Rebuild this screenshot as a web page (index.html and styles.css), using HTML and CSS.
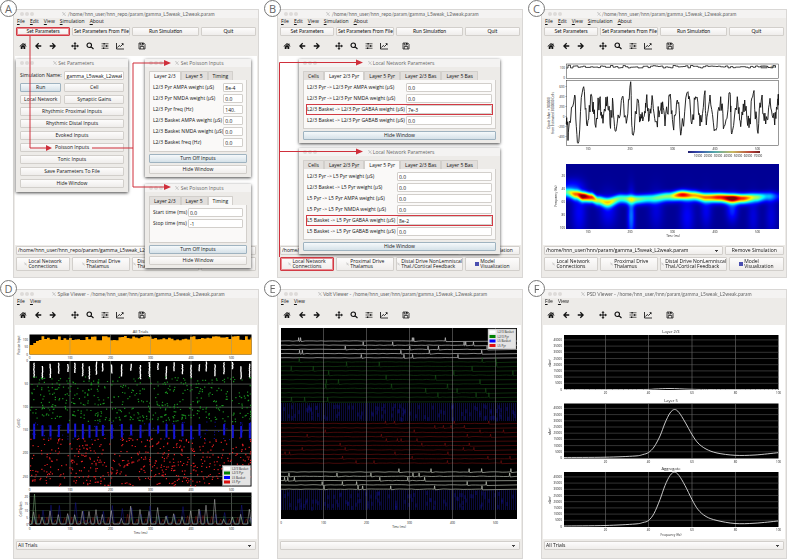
FILE: index.html
```html
<!DOCTYPE html>
<html lang="en">
<head>
  <meta charset="UTF-8" />
  <title>HNN gamma tutorial</title>
  <link rel="stylesheet" href="styles.css">
</head>
<body>
  <svg class="sprite" aria-hidden="true">
    <symbol id="i-home" viewBox="0 0 16 16"><path d="M8 2 1 8.5l1 1.2L8 4.400l6 5.300 1-1.200-2-1.900V3h-2v1.700zM3.500 9.500V14H7v-3.500h2V14h3.500V9.500L8 5.700z"/></symbol>
    <symbol id="i-back" viewBox="0 0 16 16"><path d="M8.500 1.500 2 8l6.500 6.500 1.800-1.800L7 9.500h7.500v-3H7l3.300-3.200z"/></symbol>
    <symbol id="i-forward" viewBox="0 0 16 16"><path d="M7.500 1.500 14 8l-6.500 6.500-1.800-1.800L9 9.500H1.500v-3H9L5.700 3.300z"/></symbol>
    <symbol id="i-move" viewBox="0 0 16 16"><path d="M8 0 5 3.500h2V7H3.500V5L0 8l3.500 3V9H7v3.500H5L8 16l3-3.500H9V9h3.500v2L16 8l-3.500-3v2H9V3.500h2z"/></symbol>
    <symbol id="i-search" viewBox="0 0 16 16"><path d="M10 9.500 15 14M11 6.500a4.500 4.500 0 1 1-9 0 4.500 4.500 0 0 1 9 0z" fill="none" stroke="#111" stroke-width="2.300"/></symbol>
    <symbol id="i-sliders" viewBox="0 0 16 16"><path d="M1 3.500h14M1 8h14M1 12.500h14" stroke="#111" stroke-width="1.300"/><path d="M5 2h2.500v3H5zM10 6.500h2.500v3H10zM4 11h2.500v3H4z"/></symbol>
    <symbol id="i-chart" viewBox="0 0 16 16"><path d="M1 2v12h15M3 11l3.500-4L9 9l5-5" fill="none" stroke="#111" stroke-width="1.700"/><path d="M10.500 2.500H15V7z"/></symbol>
    <symbol id="i-save" viewBox="0 0 16 16"><path d="M2 2h9.500L14 4.500V14H2zM4.500 2v4h6V2M4.500 14V9h7v5" fill="none" stroke="#111" stroke-width="1.500"/><path d="M8 2h2v3H8z"/></symbol>
    <symbol id="i-x" viewBox="0 0 10 10"><path d="M1 1h2l6 8H7zM9 1 1 9" fill="none" stroke="#999" stroke-width=".8"/></symbol>
  </svg>

  <main class="panels">
    <section class="window">
      <span class="badge">A</span>
      <header class="title"><i></i><i></i><i></i><span><svg><use href="#i-x"/></svg> /home/hnn_user/hnn_repo/param/gamma_L5weak_L2weak.param</span></header>
      <nav class="menu"><a href="#">File</a><a href="#">Edit</a><a href="#">View</a><a href="#">Simulation</a><a href="#">About</a></nav>
      <div class="actions">
        <button class="marked">Set Parameters</button><button>Set Parameters From File</button><button>Run Simulation</button><button>Quit</button>
      </div>
      <div class="toolbar"></div>
      <div class="canvas empty"></div>
      <div class="bar">
        <select aria-label="Simulation"><option>/home/hnn_user/hnn_repo/param/gamma_L5weak_L2weak.param</option></select>
        <button>Remove Simulation</button>
      </div>
      <div class="views">
        <button><svg><use href="#i-x"/></svg><span>Local Network<br>Connections</span></button>
        <button><svg><use href="#i-x"/></svg><span>Proximal Drive<br>Thalamus</span></button>
        <button><svg><use href="#i-x"/></svg><span>Distal Drive NonLemniscal<br>Thal./Cortical Feedback</span></button>
        <button><b></b><span>Model<br>Visualization</span></button>
      </div>

      <div class="dialog params">
        <header class="title"><i></i><i></i><i></i><span><svg><use href="#i-x"/></svg> Set Parameters</span></header>
        <div class="form">
          <label for="sim">Simulation Name:</label><input id="sim" value="gamma_L5weak_L2weak">
          <button class="active">Run</button><button>Cell</button>
          <button>Local Network</button><button>Synaptic Gains</button>
          <button class="wide">Rhythmic Proximal Inputs</button>
          <button class="wide">Rhythmic Distal Inputs</button>
          <button class="wide">Evoked Inputs</button>
          <button class="wide">Poisson Inputs</button>
          <button class="wide">Tonic Inputs</button>
          <button class="wide">Save Parameters To File</button>
          <button class="wide">Hide Window</button>
        </div>
      </div>

      <div class="dialog poisson">
        <header class="title"><i></i><i></i><i></i><span><svg><use href="#i-x"/></svg> Set Poisson Inputs</span></header>
        <div class="tabs"><button class="on">Layer 2/3</button><button>Layer 5</button><button>Timing</button></div>
        <div class="pane weights">
          <label>L2/3 Pyr AMPA weight (µS)<input value="8e-4"></label>
          <label>L2/3 Pyr NMDA weight (µS)<input value="0.0"></label>
          <label>L2/3 Pyr freq (Hz)<input value="140."></label>
          <label>L2/3 Basket AMPA weight (µS)<input value="0.0"></label>
          <label>L2/3 Basket NMDA weight (µS)<input value="0.0"></label>
          <label>L2/3 Basket freq (Hz)<input value="0.0"></label>
        </div>
        <div class="foot"><button class="active">Turn Off Inputs</button><button>Hide Window</button></div>
      </div>

      <div class="dialog poisson second">
        <header class="title"><i></i><i></i><i></i><span><svg><use href="#i-x"/></svg> Set Poisson Inputs</span></header>
        <div class="tabs"><button>Layer 2/3</button><button>Layer 5</button><button class="on">Timing</button></div>
        <div class="pane timing">
          <label>Start time (ms)<input value="0.0"></label>
          <label>Stop time (ms)<input value="-1"></label>
        </div>
        <div class="foot"><button class="active">Turn Off Inputs</button><button>Hide Window</button></div>
      </div>

      <svg class="arrows" viewBox="14 10 244 267">
        <path d="M30 36V148H47M92 148h41M166 63H133V187H166"/>
        <path class="head" d="M46 145l6 3-6 3zM164 60l7 3-7 3zM164 184l7 3-7 3z"/>
      </svg>
    </section>

    <section class="window">
      <span class="badge">B</span>
      <header class="title"><i></i><i></i><i></i><span><svg><use href="#i-x"/></svg> /home/hnn_user/hnn_repo/param/gamma_L5weak_L2weak.param</span></header>
      <nav class="menu"><a href="#">File</a><a href="#">Edit</a><a href="#">View</a><a href="#">Simulation</a><a href="#">About</a></nav>
      <div class="actions">
        <button>Set Parameters</button><button>Set Parameters From File</button><button>Run Simulation</button><button>Quit</button>
      </div>
      <div class="toolbar"></div>
      <div class="canvas empty"></div>
      <div class="bar">
        <select aria-label="Simulation"><option>/home/hnn_user/hnn_repo/param/gamma_L5weak_L2weak.param</option></select>
        <button>Remove Simulation</button>
      </div>
      <div class="views">
        <button class="marked"><svg><use href="#i-x"/></svg><span>Local Network<br>Connections</span></button>
        <button><svg><use href="#i-x"/></svg><span>Proximal Drive<br>Thalamus</span></button>
        <button><svg><use href="#i-x"/></svg><span>Distal Drive NonLemniscal<br>Thal./Cortical Feedback</span></button>
        <button><b></b><span>Model<br>Visualization</span></button>
      </div>

      <div class="dialog network">
        <header class="title"><i></i><i></i><i></i><span><svg><use href="#i-x"/></svg> Local Network Parameters</span></header>
        <div class="tabs"><button>Cells</button><button class="on">Layer 2/3 Pyr</button><button>Layer 5 Pyr</button><button>Layer 2/3 Bas</button><button>Layer 5 Bas</button></div>
        <div class="pane">
          <label>L2/3 Pyr -&gt; L2/3 Pyr AMPA weight (µS)<input value="0.0"></label>
          <label>L2/3 Pyr -&gt; L2/3 Pyr NMDA weight (µS)<input value="0.0"></label>
          <label class="marked">L2/3 Basket -&gt; L2/3 Pyr GABAA weight (µS)<input value="7e-3"></label>
          <label>L2/3 Basket -&gt; L2/3 Pyr GABAB weight (µS)<input value="0.0"></label>
        </div>
        <div class="foot"><button class="active">Hide Window</button></div>
      </div>

      <div class="dialog network second">
        <header class="title"><i></i><i></i><i></i><span><svg><use href="#i-x"/></svg> Local Network Parameters</span></header>
        <div class="tabs"><button>Cells</button><button>Layer 2/3 Pyr</button><button class="on">Layer 5 Pyr</button><button>Layer 2/3 Bas</button><button>Layer 5 Bas</button></div>
        <div class="pane">
          <label>L2/3 Pyr -&gt; L5 Pyr weight (µS)<input value="0.0"></label>
          <label>L2/3 Basket -&gt; L5 Pyr weight (µS)<input value="0.0"></label>
          <label>L5 Pyr -&gt; L5 Pyr AMPA weight (µS)<input value="0.0"></label>
          <label>L5 Pyr -&gt; L5 Pyr NMDA weight (µS)<input value="0.0"></label>
          <label class="marked">L5 Basket -&gt; L5 Pyr GABAA weight (µS)<input value="8e-2"></label>
          <label>L5 Basket -&gt; L5 Pyr GABAB weight (µS)<input value="0.0"></label>
        </div>
        <div class="foot"><button class="active">Hide Window</button></div>
      </div>

      <svg class="arrows" viewBox="278 10 244 267">
        <path d="M357 62.500H279.500V257M279.500 151.500H357"/>
        <path class="head" d="M356 59.500l7 3-7 3zM356 148.500l7 3-7 3z"/>
      </svg>
    </section>

    <section class="window">
      <span class="badge">C</span>
      <header class="title"><i></i><i></i><i></i><span><svg><use href="#i-x"/></svg> /home/hnn_user/hnn/param/gamma_L5weak_L2weak.param</span></header>
      <nav class="menu"><a href="#">File</a><a href="#">Edit</a><a href="#">View</a><a href="#">Simulation</a><a href="#">About</a></nav>
      <div class="actions">
        <button>Set Parameters</button><button>Set Parameters From File</button><button>Run Simulation</button><button>Quit</button>
      </div>
      <div class="toolbar"></div>
      <div class="canvas">
        <svg id="dipole" viewBox="543 56 242 189">
          <foreignObject x="566" y="164" width="213" height="65"><canvas id="spectrogram" width="426" height="130"></canvas></foreignObject>
        </svg>
      </div>
      <div class="bar">
        <select aria-label="Simulation"><option>/home/hnn_user/hnn/param/gamma_L5weak_L2weak.param</option></select>
        <button>Remove Simulation</button>
      </div>
      <div class="views">
        <button><svg><use href="#i-x"/></svg><span>Local Network<br>Connections</span></button>
        <button><svg><use href="#i-x"/></svg><span>Proximal Drive<br>Thalamus</span></button>
        <button><svg><use href="#i-x"/></svg><span>Distal Drive NonLemniscal<br>Thal./Cortical Feedback</span></button>
        <button><b></b><span>Model<br>Visualization</span></button>
      </div>
    </section>

    <section class="window viewer">
      <span class="badge">D</span>
      <header class="title"><i></i><i></i><i></i><span><svg><use href="#i-x"/></svg> Spike Viewer - /home/hnn_user/hnn/param/gamma_L5weak_L2weak.param</span></header>
      <nav class="menu"><a href="#">File</a><a href="#">View</a></nav>
      <div class="toolbar"></div>
      <div class="canvas"><svg id="spikes" viewBox="15 325 242 214"></svg></div>
      <div class="bar"><select aria-label="Trial"><option>All Trials</option></select></div>
    </section>

    <section class="window viewer">
      <span class="badge">E</span>
      <header class="title"><i></i><i></i><i></i><span><svg><use href="#i-x"/></svg> Volt Viewer - /home/hnn_user/hnn/param/gamma_L5weak_L2weak.param</span></header>
      <nav class="menu"><a href="#">File</a><a href="#">View</a></nav>
      <div class="toolbar"></div>
      <div class="canvas"><svg id="volts" viewBox="279 325 242 214"></svg></div>
      <div class="bar"><select aria-label="Trial"><option></option></select></div>
    </section>

    <section class="window viewer">
      <span class="badge">F</span>
      <header class="title"><i></i><i></i><i></i><span><svg><use href="#i-x"/></svg> PSD Viewer - /home/hnn_user/hnn/param/gamma_L5weak_L2weak.param</span></header>
      <nav class="menu"><a href="#">File</a><a href="#">View</a></nav>
      <div class="toolbar"></div>
      <div class="canvas"><svg id="psd" viewBox="543 325 242 214"></svg></div>
      <div class="bar"><select aria-label="Trial"><option>All Trials</option></select></div>
    </section>
  </main>
  <script src="plots.js"></script>
</body>
</html>
```
FILE: styles.css
```css
* {
  box-sizing: border-box;
}

body {
  margin: 0;
  background: #fff;
  color: #111;
  font-family: "Open Sans", "Noto Sans", sans-serif;
  font-size: 5px;
  line-height: 5px;
}

button, input, select {
  font: inherit;
  color: inherit;
  margin: 0;
  padding: 0;
  border: 1px solid #d2cfcb;
  border-radius: 1px;
  min-width: 0;
  height: 9px;
  white-space: nowrap;
}

button, select {
  background: linear-gradient(#fdfcfc, #efedeb);
}

input {
  background: #fff;
  padding: 0 1px;
  width: 100%;
}

.sprite {
  display: none;
}

.panels {
  display: grid;
  grid-template-columns: repeat(3, 1fr);
  gap: 11px 18px;
  padding: 9px 2px 0 13px;
}

.window {
  position: relative;
  background: #edebe8;
  border: 1px solid #d9d7d5;
  padding-bottom: 6px;
}

.viewer {
  padding-bottom: 8px;
}

.badge {
  position: absolute;
  z-index: 2;
  left: -14px;
  top: -10px;
  width: 17px;
  height: 17px;
  border: 1px solid #777;
  border-radius: 50%;
  background: #fff;
  color: #666;
  font-size: 11px;
  line-height: 15px;
  text-align: center;
}

.title {
  display: flex;
  align-items: center;
  gap: 1px;
  height: 8px;
  padding-left: 6px;
  background: #f4f3f2;
  color: #666;
  font-family: Lato, "Liberation Sans", sans-serif;
}

.title i {
  width: 4px;
  height: 4px;
  border-radius: 50%;
  background: #dddbd9;
}

.title span {
  flex: 1;
  padding-right: 16px;
  text-align: center;
  white-space: nowrap;
}

.title svg {
  width: 4px;
  height: 4px;
}

.menu {
  display: flex;
  gap: 5px;
  height: 7px;
  padding: 1px 3px;
}

.menu a {
  color: #111;
  text-decoration: none;
}

.menu a::first-letter {
  text-decoration: underline;
}

.actions, .views {
  display: grid;
  grid-template-columns: 54fr 58fr 66fr 55fr;
  gap: 2px;
  padding: 0 2px;
}

.actions {
  margin-top: 2px;
}

.actions button {
  font-family: Lato, "Liberation Sans", sans-serif;
}

.toolbar {
  display: flex;
  align-items: center;
  height: 20px;
  padding-left: 1px;
}

.toolbar button {
  width: 15px;
  height: 15px;
  border: 0;
  background: none;
}

.toolbar .gap {
  margin-left: 7px;
}

.toolbar svg {
  display: block;
  width: 8px;
  height: 8px;
  margin: auto;
  fill: #111;
}

.canvas {
  margin: 0 1px;
  background: #fff;
}

.empty {
  height: 189px;
}

.canvas svg {
  display: block;
  width: 100%;
  height: auto;
}

.canvas text {
  font-size: 3px;
  fill: #222;
  text-anchor: middle;
}

.canvas .name {
  font-size: 4px;
}

.canvas .end {
  text-anchor: end;
}

.canvas .start {
  text-anchor: start;
}

#spectrogram {
  display: block;
  width: 213px;
  height: 65px;
}

.bar {
  display: grid;
  grid-template-columns: 3fr 1fr;
  gap: 2px;
  margin-top: 1px;
  padding: 0 2px;
}

.viewer .bar {
  grid-template-columns: 1fr;
  margin-top: 2px;
}

select {
  appearance: none;
  width: 100%;
  padding: 0 1px;
  background: linear-gradient(#444, #444) right 4px top 3px / 3px 1px no-repeat, linear-gradient(#444, #444) right 5px top 4px / 1px 1px no-repeat, linear-gradient(#fdfcfc, #efedeb);
}

.views {
  margin-top: 2px;
}

.views button {
  display: flex;
  align-items: center;
  justify-content: center;
  gap: 1px;
  height: 14px;
  text-align: left;
}

.views svg {
  flex: none;
  width: 3px;
  height: 4px;
}

.views b {
  width: 4px;
  height: 4px;
  background: #4a4fb0;
}

.dialog {
  position: absolute;
  z-index: 1;
  padding-bottom: 3px;
  background: #edebe8;
  box-shadow: 0 1px 3px #444;
}

.dialog .title {
  padding-left: 4px;
  font-family: inherit;
}

.params {
  left: 2px;
  top: 49px;
  width: 112px;
}

.poisson {
  left: 131px;
  top: 49px;
  width: 106px;
}

.network {
  left: 21px;
  top: 49px;
  width: 201px;
}

.poisson.second {
  top: 174px;
}

.network.second {
  top: 138px;
}

.form {
  display: grid;
  grid-template-columns: 40fr 61fr;
  gap: 3px;
  align-items: center;
  padding: 4px 4px 1px;
  white-space: nowrap;
}

.form .wide {
  grid-column: span 2;
}

button.active {
  border-color: #9fb3c0;
  background: linear-gradient(#f5f9fb, #d5e1e8);
}

.tabs {
  display: flex;
  margin: 4px 4px 0;
}

.tabs button {
  padding: 0 4px;
  border-bottom: 0;
  border-radius: 1px 1px 0 0;
  background: #e2dfdc;
}

.tabs button.on {
  background: #faf9f8;
}

.pane {
  display: grid;
  gap: 2px;
  align-content: start;
  margin: 0 4px;
  padding: 3px;
  border: 1px solid #d2cfcb;
  border-top: 0;
  background: #faf9f8;
}

.pane label {
  display: grid;
  grid-template-columns: 1fr 86px;
  align-items: center;
  white-space: nowrap;
}

.second .pane label {
  grid-template-columns: 1fr 95px;
}

.weights {
  min-height: 72px;
}

.timing {
  min-height: 38px;
}

.weights label {
  grid-template-columns: 1fr 20px;
}

.second .timing label {
  grid-template-columns: 1fr 55px;
}

.foot {
  display: grid;
  gap: 2px;
  margin: 2px 4px 0;
}

.marked {
  border-color: #d23a44;
  box-shadow: inset 0 0 0 1px #e8898f;
}

label.marked {
  box-shadow: 0 0 0 1px #d23a44;
}

.arrows {
  position: absolute;
  z-index: 1;
  inset: 0;
  width: 100%;
  pointer-events: none;
}

.arrows path {
  fill: none;
  stroke: #cf2f3b;
}

.arrows .head {
  fill: #cf2f3b;
  stroke: none;
}
```
FILE: plots.js
```js
const NS = "http://www.w3.org/2000/svg";

// same bars and spikes on every load
let seed = 7;
function rnd() {
  seed = (seed * 16807) % 2147483647;
  return seed / 2147483647;
}

function add(svg, tag, attrs, text) {
  const el = document.createElementNS(NS, tag);
  for (const k in attrs) el.setAttribute(k, attrs[k]);
  if (text !== undefined) el.textContent = text;
  svg.appendChild(el);
  return el;
}

function line(svg, d, color, width = 0.5) {
  return add(svg, "path", { d, stroke: color, "stroke-width": width, fill: "none" });
}

function box(svg, x, y, w, h, fill = "#000", stroke = "none") {
  add(svg, "rect", { x, y, width: w, height: h, fill, stroke, "stroke-width": 0.5 });
}

function label(svg, x, y, text, cls = "") {
  add(svg, "text", { x, y, class: cls }, text);
}

function rotated(svg, x, y, text) {
  add(svg, "text", { x, y, transform: `rotate(-90 ${x} ${y})` }, text);
}

function smooth(pts) {
  let d = `M${pts[0]}`;
  for (let i = 0; i < pts.length - 1; i++) {
    const a = pts[i - 1] || pts[i], b = pts[i], c = pts[i + 1], e = pts[i + 2] || c;
    d += `C${b[0] + (c[0] - a[0]) / 6} ${b[1] + (c[1] - a[1]) / 6} ${c[0] - (e[0] - b[0]) / 6} ${c[1] - (e[1] - b[1]) / 6} ${c}`;
  }
  return d;
}

function legend(svg, x, y) {
  box(svg, x, y, 28, 20, "#e4e4e4", "#999");
  [["#fff", "L2/3 Basket"], ["green", "L2/3 Pyr"], ["#00f", "L5 Basket"], ["#d11", "L5 Pyr"]].forEach(([c, t], i) => {
    box(svg, x + 1.5, y + 1.5 + i * 4.5, 6, 3, c);
    label(svg, x + 9.5, y + 4 + i * 4.5, t, "start");
  });
}

document.querySelectorAll(".toolbar").forEach(bar => {
  bar.innerHTML = ["home", "back", "forward", "move", "search", "sliders", "chart", "save"]
    .map(n => `<button aria-label="${n}"${n === "move" || n === "save" ? ' class="gap"' : ""}><svg><use href="#i-${n}"/></svg></button>`)
    .join("");
});

// dipole
const dip = document.getElementById("dipole");
box(dip, 566.5, 64, 212, 14.5, "none", "#333");
box(dip, 566.5, 80.5, 212, 65, "none", "#333");
let d = "M566.5 68";
for (let x = 568; x < 778; x += 2.5) d += `H${x}V${(65.3 + rnd() * 2.8).toFixed(1)}`;
line(dip, d, "#111", 0.8);
box(dip, 761, 66, 6, 2, "#999", "#222");
label(dip, 773, 68, "dist");
label(dip, 565, 69, "100", "end");
label(dip, 565, 79, "0", "end");
["600", "400", "200", "0", "−200", "−400"].forEach((t, i) => {
  line(dip, `M565.500 ${86.5 + i * 10}h1`, "#333");
  label(dip, 564.5, 87.5 + i * 10, t, "end");
});
rotated(dip, 550, 113, "Dipole (nAm × 300000)");
rotated(dip, 554, 113, "from Estimated 3000000 Cells");

const wave = [[127, 372], [133, 398], [152, 285], [162, 430], [177, 265], [190, 378], [202, 283], [213, 372], [227, 295], [237, 370],
  [250, 290], [258, 372], [267, 310], [276, 393], [295, 290], [307, 370], [320, 245], [325, 402], [343, 300], [349, 362], [360, 350],
  [367, 300], [375, 362], [386, 300], [398, 365], [412, 308], [423, 378], [437, 288], [447, 375], [460, 300], [472, 395], [492, 275],
  [503, 372], [515, 290], [528, 378], [543, 272], [547, 375], [558, 285], [573, 388], [590, 290], [600, 380], [618, 278], [623, 402],
  [640, 290], [650, 380], [662, 300], [675, 383], [688, 280], [700, 390], [712, 300], [725, 372], [738, 295], [752, 375], [763, 298]];
d = "";
wave.forEach((p, i) => {
  const q = wave[i + 1] || p;
  for (let k = 0; k < 6; k++) {
    const f = k / 6, jit = k ? (rnd() - 0.5) * 56 : 0;
    const x = 524 + (p[0] + (q[0] - p[0]) * f) / 3;
    const y = (p[1] + (q[1] - p[1]) * f + jit) / 3;
    d += `${d ? "L" : "M"}${x.toFixed(1)} ${y.toFixed(1)}`;
  }
});
line(dip, d, "#111", 0.9);

[588, 630, 672.5, 715, 757.5].forEach((x, i) => {
  label(dip, x, 149.5, (i + 1) * 100);
  label(dip, x, 232.5, (i + 1) * 100);
});
[20, 40, 60, 80, 100].forEach((v, i) => label(dip, 565, 177 + i * 13, v, "end"));
rotated(dip, 556.5, 196, "Frequency (Hz)");
label(dip, 673, 237, "Time (ms)");

const stops = [["0", "#202070"], ["12%", "#3344aa"], ["38%", "#55aaaa"], ["62%", "#c8b860"], ["88%", "#b84038"], ["100%", "#702020"]];
const grad = add(dip, "linearGradient", { id: "jet" });
stops.forEach(([offset, c]) => add(grad, "stop", { offset, "stop-color": c }));
box(dip, 688, 151, 72, 2, "url(#jet)");
[10, 20, 30, 40, 50, 60, 70].forEach((v, i) => label(dip, 698 + i * 10, 156.5, v + "000"));

// spectrogram: a ridge of power near 50 Hz, drawn in the jet colormap
const cv = document.getElementById("spectrogram");
const ctx = cv.getContext("2d");
const img = ctx.createImageData(426, 130);
const ridge = [[0, 28, .35], [10, 30, .65], [17, 32, .97], [25, 33, .82], [32, 36, .54], [41, 38, .58], [55, 34, .44], [67, 35, .5], [85, 34, .4], [102, 32, .5],
  [116, 30.5, .86], [127, 31, .68], [140, 33, .7], [153, 33, .85], [166, 34, 1], [176, 34, .82], [190, 33, .5], [202, 32, .28], [213, 32, .12]];
const fringe = [[13, 48, 5, 16, .1], [42, 46, 6, 12, .1], [65, 52, 2.5, 16, .22], [90, 46, 5, 14, .07], [121, 52, 5, 14, .1],
  [140, 46, 4, 12, .09], [166, 45, 4, 9, .15], [187, 52, 4, 14, .07], [205, 52, 4, 14, .07], [5, 24, 8, 6, .14]];
const bump = v => Math.max(0, Math.min(1, 1.5 - Math.abs(v)));
for (let py = 0; py < 130; py++) {
  for (let px = 0; px < 426; px++) {
    const x = px / 2, y = py / 2;
    let i = 0;
    while (i < ridge.length - 2 && ridge[i + 1][0] < x) i++;
    const a = ridge[i], b = ridge[i + 1];
    let f = (x - a[0]) / (b[0] - a[0]);
    f = f * f * (3 - 2 * f);
    const dy = y - (a[1] + (b[1] - a[1]) * f);
    let v = (a[2] + (b[2] - a[2]) * f) * Math.exp(-dy * dy / (dy > 0 ? 24 : 16));
    for (const [cx, cy, sx, sy, p] of fringe) v += p * Math.exp(-((x - cx) ** 2) / (2 * sx * sx) - ((y - cy) ** 2) / (2 * sy * sy));
    v = Math.min(1, v + 0.02);
    const o = (py * 426 + px) * 4;
    img.data[o] = 255 * bump(4 * v - 3);
    img.data[o + 1] = 255 * bump(4 * v - 2);
    img.data[o + 2] = 255 * bump(4 * v - 1);
    img.data[o + 3] = 255;
  }
}
ctx.putImageData(img, 0, 0);

// spikes
const sp = document.getElementById("spikes");
const ticks = [29.5, 70, 110.5, 150.5, 191, 231.5];
label(sp, 140.5, 333, "All Trials", "name");
box(sp, 29.5, 334.5, 222, 20);
d = "M29.5 354.500V348";
for (let x = 30.5, i = 0; x < 251.5; x += 2.75, i++) {
  const y = i < 3 ? 345 - i * 2 : 336 + rnd() * 4.5;
  d += `V${y.toFixed(1)}H${Math.min(251.5, x + 2.75)}`;
}
add(sp, "path", { d: d + "V354.500z", fill: "orange" });
box(sp, 29.5, 361, 222, 125.500);
box(sp, 29.5, 492.5, 222, 33.500);
ticks.forEach((x, i) => {
  [358.5, 490.5, 530].forEach(y => label(sp, x, y, i * 100));
  if (i) line(sp, `M${x} 334.500v20M${x} 361v125.500M${x} 492.500v33.500`, "#8c948c");
});
for (let i = 0; i < 6; i++) {
  if (i) line(sp, `M29.5 ${361 + i * 23.1}h222`, "#8c948c");
  label(sp, 28, 362 + i * 23.1, i * 50, "end");
}
for (let i = 0; i < 5; i++) {
  if (i) line(sp, `M29.5 ${524.5 - i * 7}h222`, "#385038");
  label(sp, 28, 525.5 - i * 7, i * 5, "end");
}
["100", "50", "0"].forEach((t, i) => label(sp, 28, 340.5 + i * 7.5, t, "end"));
rotated(sp, 20, 345, "Poisson Input");
rotated(sp, 20, 423, "Cell ID");
rotated(sp, 22, 509, "Cell Spikes");
label(sp, 140.5, 534, "Time (ms)");

const bursts = [101, 126, 150, 175, 203, 224, 247, 267, 288, 307, 334, 364, 392, 420, 447, 473, 498, 521, 546, 572, 597, 618, 644, 671, 697, 722, 748].map(x => x / 3);
function dots(n, color, y0, y1, spread, size, near) {
  let p = "";
  for (let i = 0; i < n; i++) {
    const c = bursts[Math.floor(rnd() * bursts.length)];
    let x = rnd() < near ? c + (rnd() + rnd() - 1) * spread : 30 + rnd() * 221;
    x = Math.max(30, Math.min(250, x));
    p += `M${x.toFixed(1)} ${(y0 + rnd() * (y1 - y0)).toFixed(1)}h${size}`;
  }
  line(sp, p, color, size);
}
bursts.forEach((x, i) => {
  const top = 362 + (i % 3 === 1 ? 2 : 0) + rnd() * 3, end = top + 6 + rnd() * 9;
  let p = "";
  for (let y = top; y < end; y += 1) p += `M${(x - 0.6 + rnd() * 0.6).toFixed(1)} ${y.toFixed(1)}h1.300`;
  line(sp, p, "#fff", 1.1);
  if (rnd() > 0.1) line(sp, `M${x + 0.5} ${423 + rnd() * 3}V${433 + rnd() * 7}`, "#1616d8", 2);
});
dots(480, "#18901f", 377, 422, 5, 1.2, 0.75);
dots(120, "#1111b8", 422, 440, 2.5, 1, 0.8);
dots(520, "#e01c20", 438, 486, 6, 1.2, 0.75);
legend(sp, 222.5, 465.5);

function spikeLine(color, min, max, shift) {
  let p = "M29.5 524.500";
  bursts.forEach(x => {
    x += shift;
    p += `L${x - 2} 524L${x} ${(524 - min - rnd() * (max - min)).toFixed(1)}L${Math.min(251.5, x + 2)} 524`;
  });
  line(sp, p, color, 0.5);
}
spikeLine("#181890", 3, 22, 1);
spikeLine("#7c1616", 2, 10, -3);
spikeLine("#1f611f", 2, 8, 0.5);
spikeLine("#bbb", 3, 25, 0);
line(sp, "M32 524.500L34.500 494L36.500 524", "#7fb27f");

// volts
const vt = document.getElementById("volts");
box(vt, 281, 328, 236, 191);
function traces(y0, n, gap, color, width, count, jump) {
  for (let i = 0; i < n; i++) {
    const y = y0 + i * gap;
    let p = `M281 ${y}`, x = 281;
    const at = Array.from({ length: count }, () => 284 + rnd() * 229).sort((a, b) => a - b);
    at.forEach(s => {
      while (x + 4 < s) {
        x += 4;
        p += `L${x} ${(y + (rnd() - 0.5) * 0.5).toFixed(1)}`;
      }
      if (s > x) {
        p += `L${s} ${y}L${s + 0.4} ${y - jump}L${s + 1} ${y + 0.6}`;
        x = s + 1;
      }
    });
    line(vt, p + `L517 ${y}`, color, width);
  }
}
traces(341, 5, 4.2, "#ddd", 0.6, 5, 3.4);
traces(362, 10, 4.4, "#1a5a1a", 0.5, 3, 4.500);
traces(423.5, 10, 4.4, "#8a1212", 0.5, 4, 2.600);
traces(472, 5, 4.3, "#d8dfd0", 0.6, 6, 3.4);
function blueField(y0, y1) {
  for (let y = y0; y < y1; y += 2) {
    const l = line(vt, `M281 ${y}h236`, "#1a1a88", 0.9);
    l.setAttribute("stroke-dasharray", "1 1");
  }
  let p = "";
  for (let i = 0; i < 90; i++) p += `M${281 + Math.round(rnd() * 235)} ${(y0 + rnd() * (y1 - y0 - 4)).toFixed(1)}v4`;
  line(vt, p, "#12128a", 0.7);
}
blueField(404, 422);
blueField(491, 511);
[281, 323.5, 366.5, 409.5, 452.5, 495.5].forEach((x, i) => {
  if (i) line(vt, `M${x} 328v191`, "#888");
  label(vt, x, 523.5, i * 100);
});
label(vt, 399, 527.5, "Time (ms)");
legend(vt, 488, 329);

// psd
const ps = document.getElementById("psd");
function psd(name, top, pts) {
  const base = top + 54.5;
  label(ps, 671, top - 2, name, "name");
  box(ps, 564, top, 214.5, 55);
  [605.5, 648.5, 692, 735.5, 778.5].forEach((x, i) => {
    if (i < 4) line(ps, `M${x} ${top}v55`, "#888");
    label(ps, x, base + 4.5, (i + 1) * 20);
  });
  for (let i = 0; i < 9; i++) {
    const y = base - i * 6.2;
    if (i) line(ps, `M564 ${y}h214.500`, "#666");
    label(ps, 562, y + 1, i * 5000, "end");
  }
  rotated(ps, 550.5, top + 28, "nAm²");
  line(ps, smooth(pts.map(([x, y]) => [x, base - y])), "#ddd", 0.9);
}
psd("Layer 2/3", 335, [[564, 0], [640, 0], [655, .5], [670, 1], [690, .3], [710, 0], [778, 0]]);
psd("Layer 5", 403.5, [[564, .5], [605, .8], [635, 2], [643, 3.500], [648.5, 5.5], [654, 11], [660, 22], [665, 35], [670, 45], [674.5, 48.500], [679, 45.500],
  [685, 36], [692, 23.5], [698, 15], [706, 9], [717, 5], [735, 2.7], [755, 3], [778, 5.3]]);
psd("Aggregate", 472, [[564, .5], [605, 1], [635, 2.5], [643, 4], [648.5, 6], [654, 13], [660, 27], [665, 41], [670, 51], [674.5, 54.300], [679, 51],
  [685, 41], [692, 27], [698, 17], [706, 10], [717, 6], [735, 3], [755, 3.3], [778, 5.5]]);
label(ps, 671, 536, "Frequency (Hz)");
```
